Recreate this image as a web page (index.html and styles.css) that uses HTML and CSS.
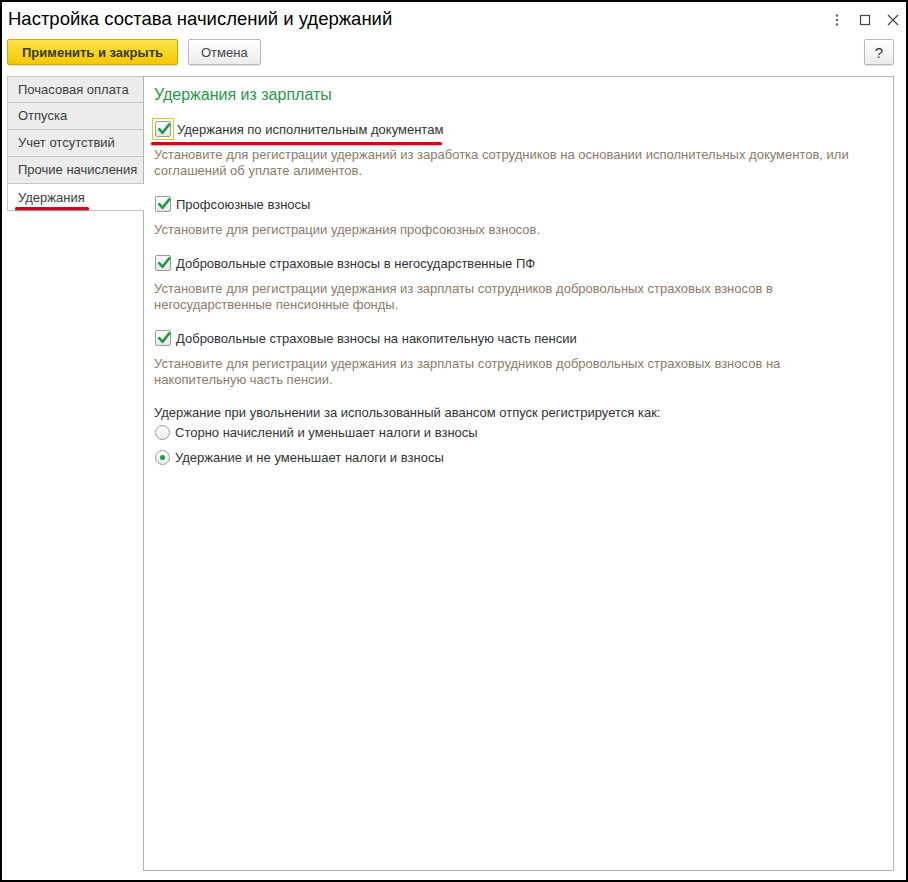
FILE: index.html
```html
<!DOCTYPE html>
<html lang="ru">
<head>
<meta charset="utf-8">
<title>Настройка состава начислений и удержаний</title>
<link rel="stylesheet" href="styles.css">
</head>
<body>
<div class="window">
  <div class="titlebar">
    <h1 class="title">Настройка состава начислений и удержаний</h1>
    <div class="win-icons">
      <svg class="wi" width="14" height="14" viewBox="0 0 14 14"><circle cx="7" cy="2.5" r="1.2" fill="#666"/><circle cx="7" cy="7" r="1.2" fill="#666"/><circle cx="7" cy="11.5" r="1.2" fill="#666"/></svg>
      <svg class="wi" width="14" height="14" viewBox="0 0 14 14"><rect x="2.5" y="2.5" width="9" height="9" fill="none" stroke="#444" stroke-width="1.2"/></svg>
      <svg class="wi" width="14" height="14" viewBox="0 0 14 14"><path d="M2 2 L12 12 M12 2 L2 12" stroke="#444" stroke-width="1.2"/></svg>
    </div>
  </div>
  <div class="toolbar">
    <button class="btn btn-primary">Применить и закрыть</button>
    <button class="btn">Отмена</button>
    <span class="spacer"></span>
    <button class="btn btn-help">?</button>
  </div>
  <div class="main">
    <div class="tabs">
      <div class="tab">Почасовая оплата</div>
      <div class="tab">Отпуска</div>
      <div class="tab">Учет отсутствий</div>
      <div class="tab">Прочие начисления</div>
      <div class="tab tab-active"><span class="tab-mark">Удержания</span></div>
    </div>
    <div class="panel">
      <div class="heading">Удержания из зарплаты</div>

      <div class="item">
        <div class="row row-focus">
          <span class="cb-focus"><span class="cb"><svg width="16" height="16" viewBox="0 0 16 16"><path d="M3.2 8.2 L6.6 11.8 L13.2 3.4" fill="none" stroke="#1c9b3f" stroke-width="2.6" stroke-linecap="round" stroke-linejoin="round"/></svg></span></span>
          <span class="lbl">Удержания по исполнительным документам</span>
        </div>
        <div class="desc">Установите для регистрации удержаний из заработка сотрудников на основании исполнительных документов, или соглашений об уплате алиментов.</div>
      </div>

      <div class="item">
        <div class="row">
          <span class="cb"><svg width="16" height="16" viewBox="0 0 16 16"><path d="M3.2 8.2 L6.6 11.8 L13.2 3.4" fill="none" stroke="#1c9b3f" stroke-width="2.6" stroke-linecap="round" stroke-linejoin="round"/></svg></span>
          <span class="lbl">Профсоюзные взносы</span>
        </div>
        <div class="desc">Установите для регистрации удержания профсоюзных взносов.</div>
      </div>

      <div class="item">
        <div class="row">
          <span class="cb"><svg width="16" height="16" viewBox="0 0 16 16"><path d="M3.2 8.2 L6.6 11.8 L13.2 3.4" fill="none" stroke="#1c9b3f" stroke-width="2.6" stroke-linecap="round" stroke-linejoin="round"/></svg></span>
          <span class="lbl">Добровольные страховые взносы в негосударственные ПФ</span>
        </div>
        <div class="desc">Установите для регистрации удержания из зарплаты сотрудников добровольных страховых взносов в<br>негосударственные пенсионные фонды.</div>
      </div>

      <div class="item">
        <div class="row">
          <span class="cb"><svg width="16" height="16" viewBox="0 0 16 16"><path d="M3.2 8.2 L6.6 11.8 L13.2 3.4" fill="none" stroke="#1c9b3f" stroke-width="2.6" stroke-linecap="round" stroke-linejoin="round"/></svg></span>
          <span class="lbl">Добровольные страховые взносы на накопительную часть пенсии</span>
        </div>
        <div class="desc">Установите для регистрации удержания из зарплаты сотрудников добровольных страховых взносов на<br>накопительную часть пенсии.</div>
      </div>

      <div class="group">
        <div class="group-label">Удержание при увольнении за использованный авансом отпуск регистрируется как:</div>
        <div class="radio-row"><span class="radio"></span><span class="lbl">Сторно начислений и уменьшает налоги и взносы</span></div>
        <div class="radio-row"><span class="radio radio-on"></span><span class="lbl">Удержание и не уменьшает налоги и взносы</span></div>
      </div>
    </div>
  </div>
</div>
</body>
</html>
```

FILE: styles.css
```css
* { box-sizing: border-box; }
html, body { margin: 0; padding: 0; }
body {
  font-family: "Liberation Sans", Arial, sans-serif;
  font-size: 13px;
  color: #333;
  background: #fff;
}
.window {
  width: 908px;
  height: 882px;
  border: 2px solid #000;
  background: #fff;
  display: flex;
  flex-direction: column;
  padding: 0 12px 9px 5px;
}
.titlebar {
  display: flex;
  align-items: center;
  height: 33px;
  padding-top: 1px;
}
.title {
  margin: 0 0 0 1px;
  font-size: 18.5px;
  font-weight: normal;
  color: #000;
  flex: 1;
}
.win-icons {
  display: flex;
  align-items: center;
  gap: 14px;
  margin-right: -6px;
  padding-top: 1px;
}
.toolbar {
  display: flex;
  align-items: center;
  height: 26px;
  margin-top: 4px;
  gap: 10px;
}
.spacer { flex: 1; }
.btn {
  font-family: "Liberation Sans", Arial, sans-serif;
  font-size: 13px;
  color: #444;
  height: 26px;
  border: 1px solid #b9b9b9;
  border-radius: 2px;
  background: linear-gradient(#ffffff, #ececec);
  box-shadow: 0 1px 1px rgba(0,0,0,0.12);
  padding: 0 12px;
  margin: 0;
}
.btn-primary {
  width: 171px;
  font-weight: bold;
  color: #3a3a2a;
  background: linear-gradient(#fbe34a, #f2c800);
  border-color: #d1a900;
}
.btn-help {
  width: 30px;
  padding: 0;
  font-size: 15px;
  color: #333;
}
.main {
  flex: 1;
  display: flex;
  margin-top: 11px;
}
.tabs {
  width: 136px;
  display: flex;
  flex-direction: column;
}
.tab {
  height: 27px;
  line-height: 25px;
  padding-left: 10px;
  background: #ececec;
  border: 1px solid #c4c4c4;
  border-right: none;
  color: #3c3c3c;
  white-space: nowrap;
}
.tab + .tab { border-top: none; height: 27px; }
.tab-active {
  background: #fff;
  margin-right: -1px;
  position: relative;
  z-index: 1;
  height: 28px;
  line-height: 27px;
}
.tab-mark {
  display: inline-block;
  position: relative;
}
.tab-mark::after {
  content: "";
  position: absolute;
  left: -3px;
  right: -4px;
  top: 23px;
  height: 3px;
  background: #d4001c;
  border-radius: 2px;
  box-shadow: 0 1px 2px rgba(0,0,0,0.35);
}
.panel {
  flex: 1;
  border: 1px solid #b4b4b4;
  padding: 8px 10px 0 10px;
}
.heading {
  font-size: 16px;
  line-height: 19px;
  color: #1f9a46;
  margin-bottom: 14px;
}
.item { margin-bottom: 14px; }
.item:nth-of-type(2) { margin-bottom: 14px; }
.row {
  display: flex;
  align-items: center;
  height: 22px;
  position: relative;
}
.row-focus::after {
  content: "";
  position: absolute;
  left: -3px;
  width: 291px;
  top: 24px;
  height: 3px;
  background: #d4001c;
  border-radius: 2px;
  box-shadow: 0 1px 2px rgba(0,0,0,0.35);
}
.cb-focus {
  display: flex;
  align-items: center;
  justify-content: center;
  width: 22px;
  height: 22px;
  border: 1px solid #f0c020;
  margin-left: -2px;
  margin-right: -2px;
}
.cb {
  display: inline-flex;
  width: 16px;
  height: 16px;
  border: 1px solid #9c9c9c;
  border-radius: 2px;
  background: linear-gradient(#fdfdfd, #e8e8e8);
  align-items: center;
  justify-content: center;
  margin-left: 1px;
  flex: none;
}
.cb svg { margin: -1px -2px 0 0; }
.cb-focus .cb { margin-left: 0; }
.lbl {
  margin-left: 5px;
  color: #333;
}
.desc {
  margin-top: 7px;
  line-height: 16px;
  color: #8b7b6a;
}
.group { margin-top: 17px; }
.group-label {
  line-height: 16px;
  color: #333;
}
.radio-row {
  display: flex;
  align-items: center;
  height: 22px;
  margin-top: 0;
}
.radio-row + .radio-row { margin-top: 3px; }
.radio {
  width: 15px;
  height: 15px;
  border: 1px solid #9c9c9c;
  border-radius: 50%;
  background: linear-gradient(#fdfdfd, #ececec);
  margin-left: 1px;
  display: flex;
  align-items: center;
  justify-content: center;
  flex: none;
}
.radio-on::after {
  content: "";
  width: 5px;
  height: 5px;
  border-radius: 50%;
  background: #1c9b3f;
}
```
